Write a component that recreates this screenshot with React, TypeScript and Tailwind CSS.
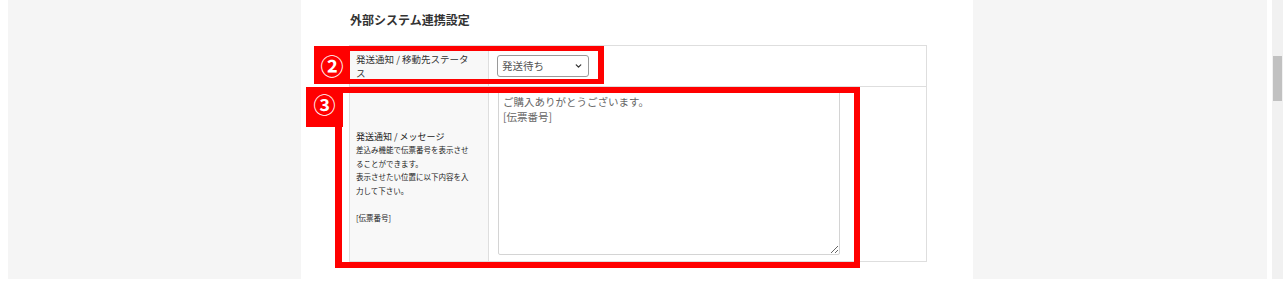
import { ChevronDown } from "lucide-react";

const jp = "font-['Noto_Sans_CJK_JP','Noto_Sans',sans-serif]";

export default function App() {
  return (
    <div className={`flex h-[282px] w-[1288px] bg-white text-[#333] ${jp}`}>
      <div className="w-2 shrink-0" />
      <div className="h-[279px] w-[293px] shrink-0 bg-[#f5f5f5]" />

      <main className="relative h-[279px] w-[672px] shrink-0 bg-white">
        <h2 className="pl-[49px] pt-[12px] text-[12px] font-bold leading-4">外部システム連携設定</h2>

        <div className="ml-[48px] mt-[17px] w-[578px] border border-[#dedede]">
          <div className="flex h-[41px] border-b border-[#dedede]">
            <div className="flex w-[139px] shrink-0 items-center border-r border-[#dedede] bg-[#f8f8f8] pl-[6px] pr-[16px] text-[9.5px] leading-[14px]">
              発送通知 / 移動先ステータス
            </div>
            <div className="flex items-center pl-[8px]">
              <div className="relative flex h-[22px] w-[92px] items-center">
                <select
                  defaultValue="waiting"
                  className="h-full w-full appearance-none rounded-[3px] border border-[#9a9a9a] bg-white pl-[4px] text-[10.5px] leading-none text-[#555]"
                >
                  <option value="waiting">発送待ち</option>
                </select>
                <ChevronDown
                  className="pointer-events-none absolute right-[6px] top-1/2 size-[9px] -translate-y-1/2 text-[#333]"
                  strokeWidth={3.5}
                />
              </div>
            </div>
          </div>

          <div className="flex h-[174px]">
            <div className="flex w-[139px] shrink-0 flex-col justify-center border-r border-[#dedede] bg-[#f8f8f8] pl-[6px] pr-[15px] pt-[6px] leading-[13.4px] text-[#222]">
              <p className="text-[9px]">発送通知 / メッセージ</p>
              <p className="text-[7.5px]">差込み機能で伝票番号を表示させることができます。</p>
              <p className="text-[7.5px]">表示させたい位置に以下内容を入力して下さい。</p>
              <p className="h-[13.4px]" />
              <p className="text-[7.5px]">[伝票番号]</p>
            </div>
            <div className="pl-[9px] pt-[4px]">
              <textarea
                readOnly
                defaultValue={"ご購入ありがとうございます。\n[伝票番号]"}
                className={`block h-[164px] w-[342px] rounded-[2px] border border-[#d4d4d4] bg-white px-[4px] py-[2px] text-[10.5px] leading-[15px] text-[#666] outline-none ${jp}`}
              />
            </div>
          </div>
        </div>

        {/* annotation ② */}
        <div className="absolute left-[13px] top-[46px] h-[38px] w-[290px] border-y-[5px] border-r-[6px] border-l-[36px] border-[#f00]" />
        <div className="absolute left-[13px] top-[46px] flex h-[38px] w-[36px] items-center justify-center text-[23px] font-bold leading-none text-white">
          ②
        </div>

        {/* annotation ③ */}
        <div className="absolute left-[34px] top-[87px] h-[181px] w-[525px] border-[6px] border-l-[7px] border-[#f00]" />
        <div className="absolute left-[5px] top-[87px] flex h-[40px] w-[37px] items-start justify-center bg-[#f00] pt-[5px] text-[22px] font-bold leading-none text-white">
          ③
        </div>
      </main>

      <div className="h-[279px] w-[294px] shrink-0 bg-[#f5f5f5]" />
      <div className="w-[5px] shrink-0" />
      <div className="h-[279px] w-[11px] shrink-0 bg-[#f1f1f1] px-px pt-[56px]">
        <div className="h-[45px] bg-[#c1c1c1]" />
      </div>
    </div>
  );
}
